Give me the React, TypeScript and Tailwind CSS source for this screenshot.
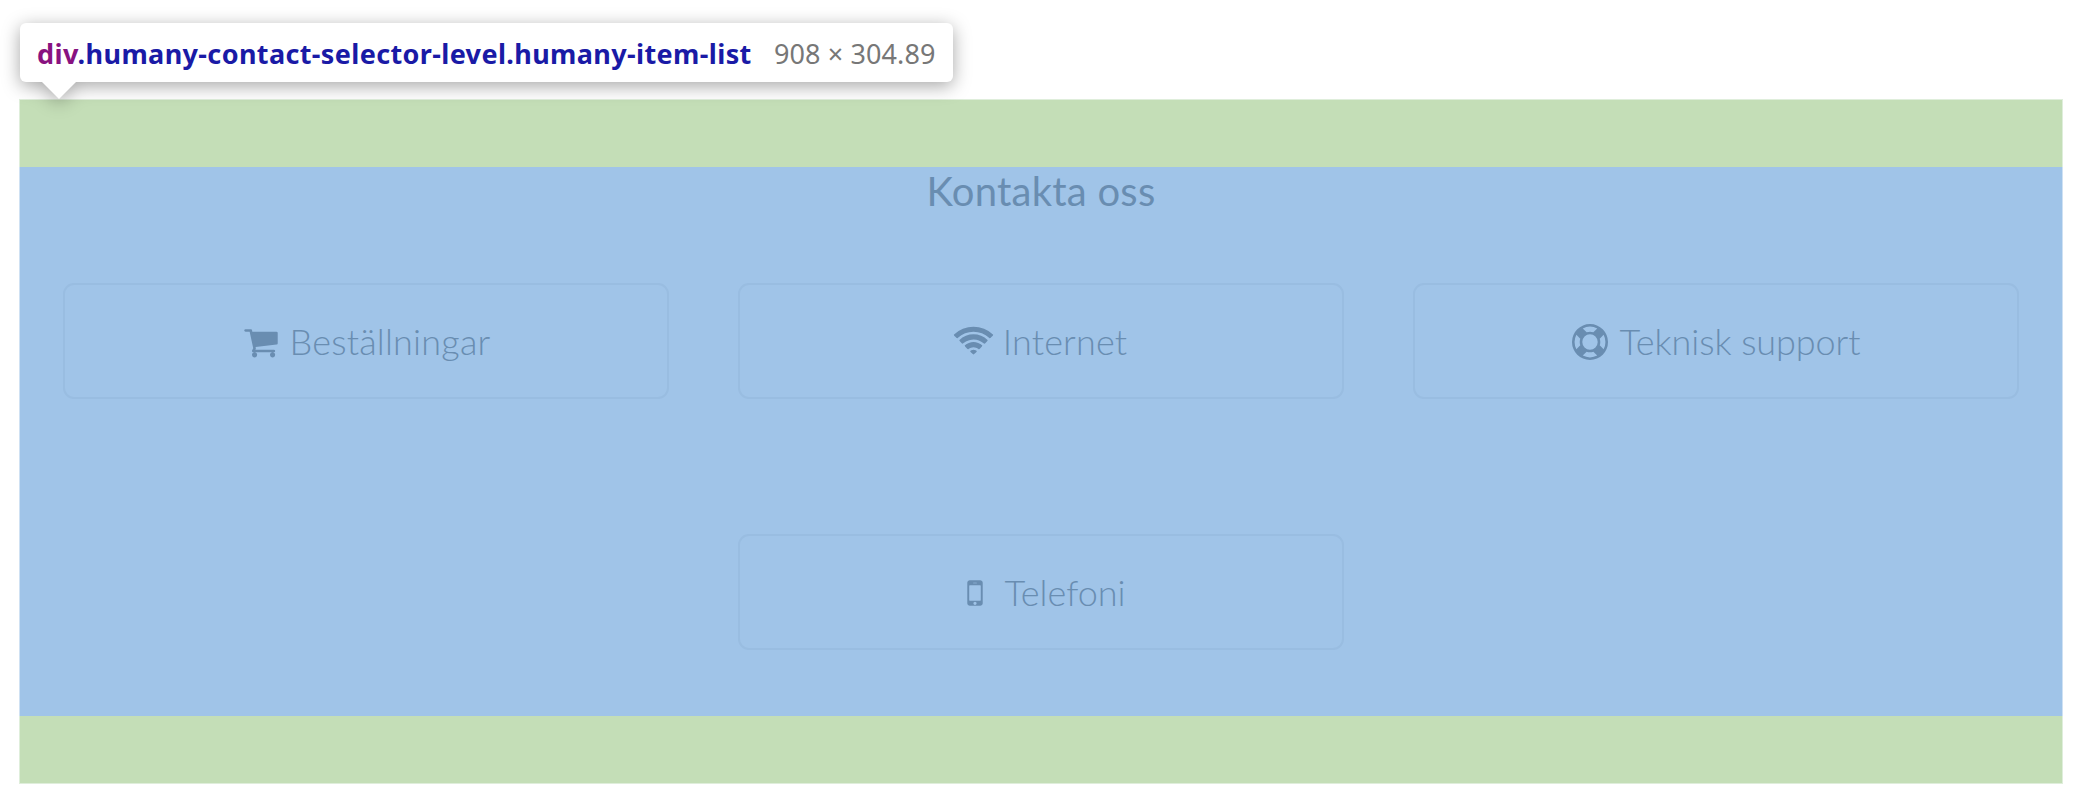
import React from "react";

const CART =
  "M704 1536q0 52-38 90t-90 38-90-38-38-90 38-90 90-38 90 38 38 90zm896 0q0 52-38 90t-90 38-90-38-38-90 38-90 90-38 90 38 38 90zm128-1088v512q0 24-16.5 42.5t-40.5 21.5l-1044 122q13 60 13 70 0 16-24 64h920q26 0 45 19t19 45-19 45-45 19h-1024q-26 0-45-19t-19-45q0-11 8-31.5t16-36 21.5-40 15.5-29.5l-177-823h-204q-26 0-45-19t-19-45 19-45 45-19h256q16 0 28.5 6.5t19.5 15.5 13 24.5 8 26 5.5 29.5 4.5 26h1201q26 0 45 19t19 45z";
const WIFI =
  "M1024 1523q-20 0-93-73.5t-73-93.5q0-32 62.5-54t103.5-22 103.5 22 62.5 54q0 20-73 93.5t-93 73.5zm270-271q-2 0-40-25t-101.5-50-128.5-25-128.5 25-101 50-40.5 25q-18 0-93.5-75t-75.5-93q0-13 10-23 78-77 196-121t233-44 233 44 196 121q10 10 10 23 0 18-75.5 93t-93.5 75zm273-272q-11 0-23-8-136-105-252-154.5t-268-49.5q-85 0-170.5 22t-149 53-113.5 62-79 53-31 22q-17 0-92-75t-75-93q0-12 10-22 132-132 320-205t380-73 380 73 320 205q10 10 10 22 0 18-75 93t-92 75zm271-271q-11 0-22-9-179-157-371.5-236.5t-420.5-79.5-420.5 79.5-371.5 236.5q-11 9-22 9-17 0-92.5-75t-75.5-93q0-13 10-23 187-186 445-288t527-102 527 102 445 288q10 10 10 23 0 18-75.5 93t-92.5 75z";
const RING =
  "M896 0q182 0 348 71t286 191 191 286 71 348-71 348-191 286-286 191-348 71-348-71-286-191-191-286-71-348 71-348 191-286 286-191 348-71zm0 128q-190 0-361 90l194 194q82-28 167-28t167 28l194-194q-171-90-361-90zm-678 1129l194-194q-28-82-28-167t28-167l-194-194q-90 171-90 361t90 361zm678 407q190 0 361-90l-194-194q-82 28-167 28t-167-28l-194 194q171 90 361 90zm0-384q159 0 271.5-112.5t112.5-271.5-112.5-271.5-271.5-112.5-271.5 112.5-112.5 271.5 112.5 271.5 271.5 112.5zm484-217l194 194q90-171 90-361t-90-361l-194 194q28 82 28 167t-28 167z";
const MOBILE =
  "M976 1408q0-33-23.5-56.5t-56.5-23.5-56.5 23.5-23.5 56.5 23.5 56.5 56.5 23.5 56.5-23.5 23.5-56.5zm208-160v-704q0-13-9.5-22.5t-22.5-9.5h-512q-13 0-22.5 9.5t-9.5 22.5v704q0 13 9.5 22.5t22.5 9.5h512q13 0 22.5-9.5t9.5-22.5zm-192-848q0-16-16-16h-160q-16 0-16 16t16 16h160q16 0 16-16zm288-16v1024q0 52-38 90t-90 38h-512q-52 0-90-38t-38-90v-1024q0-52 38-90t90-38h512q52 0 90 38t38 90z";

type ItemProps = { label: string; path: string; wide?: boolean; tracking?: string };

function Item({ label, path, wide = false, tracking = "tracking-normal" }: ItemProps) {
  return (
    <button className="flex h-[116px] w-[606px] shrink-0 items-center justify-center rounded-[11px] border-2 border-[#99bde1] pr-[4px] text-[#698db1]">
      <span className="flex w-[46px] shrink-0 justify-center pt-[2px]">
        {wide ? (
          <svg viewBox="0 0 2048 1792" className="h-9 w-[41px]" fill="currentColor">
            <path d={path} />
          </svg>
        ) : (
          <svg viewBox="0 0 1792 1792" className="h-9 w-9" fill="currentColor">
            <path d={path} />
          </svg>
        )}
      </span>
      <span className={`ml-[6px] text-[36px] leading-[54px] font-light whitespace-nowrap ${tracking}`}>{label}</span>
    </button>
  );
}

export default function App() {
  return (
    <div className="h-[808px] w-[2085px] overflow-hidden bg-white pt-[23px] pl-[19px] font-['Lato',sans-serif]">
      <div className="relative z-10 ml-px flex h-[59px] w-[933px] items-center rounded-[6px] bg-white pt-[3px] pl-[17px] font-['Noto_Sans',sans-serif] text-[27px] whitespace-nowrap drop-shadow-[0_4.5px_9px_rgba(0,0,0,0.35)]">
        <span className="w-[737px] font-bold tracking-[0.37px] text-[#1a1aa6]">
          <span className="text-[#881280]">div</span>.humany-contact-selector-level.humany-item-list
        </span>
        <span className="tracking-[0.1px] text-[#777777]">908 × 304.89</span>
        <svg viewBox="0 0 34 17" className="absolute top-[59px] left-[22px] h-[17px] w-[34px]" fill="#fff">
          <path d="M0 0H34L17 17Z" />
        </svg>
      </div>

      <main className="mt-[17px] w-[2044px]">
        <div className="h-[68px] border border-b-0 border-[#dfeedb] bg-[#c4deb7]" />
        <section className="h-[549px] border-x border-[#cfe1f3] bg-[#a0c4e8]">
          <h1 className="h-[116px] text-center text-[40px] leading-[48px] tracking-[0.25px] text-[#698db1]">Kontakta oss</h1>
          <div className="ml-[43px] flex w-[1956px] justify-between">
            <Item label="Beställningar" path={CART} tracking="tracking-[0.2px]" />
            <Item label="Internet" path={WIFI} wide tracking="tracking-[0.15px]" />
            <Item label="Teknisk support" path={RING} tracking="tracking-[-0.08px]" />
          </div>
          <div className="mt-[135px] ml-[43px] flex w-[1956px] justify-center">
            <Item label="Telefoni" path={MOBILE} />
          </div>
        </section>
        <div className="h-[68px] border border-t-0 border-[#dfeedb] bg-[#c4deb7]" />
      </main>
    </div>
  );
}
